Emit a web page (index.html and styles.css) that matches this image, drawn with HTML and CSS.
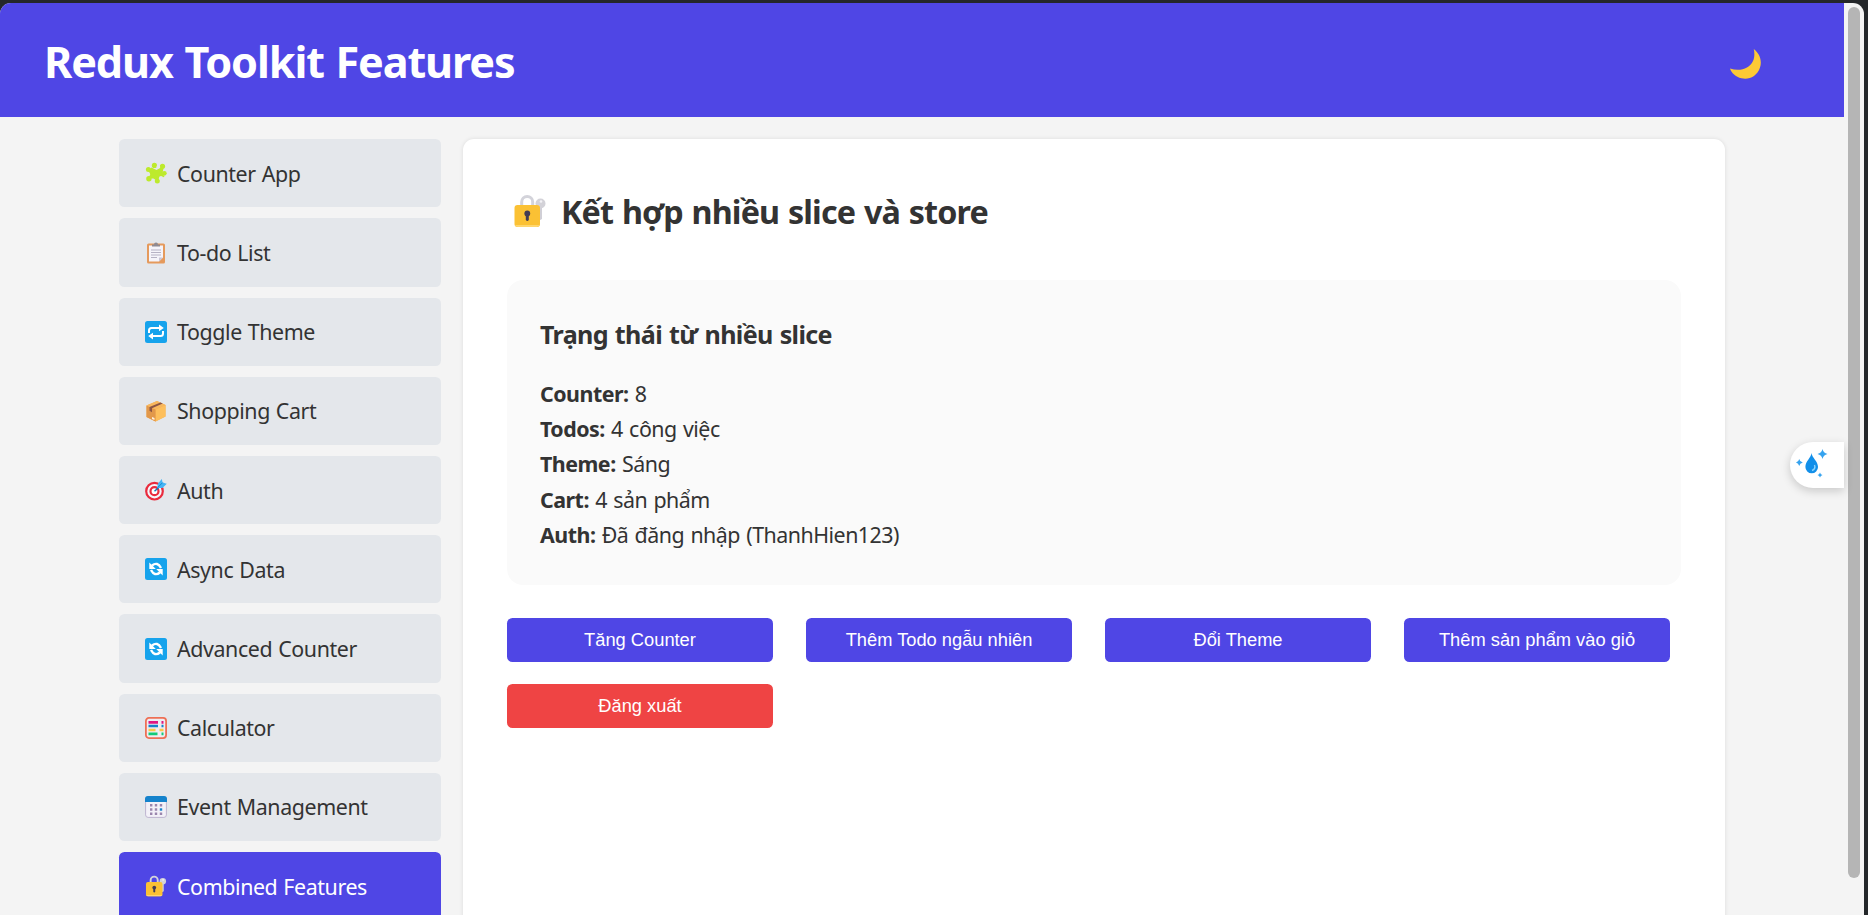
FILE: index.html
```html
<!DOCTYPE html>
<html lang="vi">
<head>
<meta charset="utf-8">
<title>Redux Toolkit Features</title>
<link rel="stylesheet" href="styles.css">
</head>
<body>
<svg class="sprite" aria-hidden="true">
  <symbol id="puzzle" viewBox="0 0 22 22">
    <g fill="#bdea2c"><path d="M6.500 5.500l5 2.500 4.500-2.500 2.500 1-1 4.500 2 4-5.100.5-2 3.500-4-2.500-4.900 0 1.500-4-1.500-4.500z"/>
    <circle cx="9.400" cy="3.400" r="2.600"/><circle cx="17.500" cy="4.300" r="2.600"/><circle cx="3.400" cy="7.600" r="2.500"/><circle cx="19.300" cy="11.300" r="2.400"/><circle cx="3.900" cy="16.800" r="2.700"/><circle cx="12.300" cy="18.900" r="2.500"/></g>
    <circle cx="13.300" cy="4.500" r="1.700" fill="#e4e7eb"/><circle cx="16" cy="16" r="2" fill="#e4e7eb"/><circle cx="3.300" cy="12.300" r="1.700" fill="#e4e7eb"/>
  </symbol>
  <symbol id="clipboard" viewBox="0 0 22 22">
    <rect x="2" y="1.500" width="18" height="20" rx="1.500" fill="#e59a5c"/><path d="M4 3.500h14v12l-4 4H4z" fill="#f5f4fa"/><path d="M14 19.500v-4h4z" fill="#c9c5d6"/><path d="M7 4V2.500h2a2 2 0 0 1 4 0h2V4.500H7z" fill="#8f8a91"/><path d="M6 8h10M6 10.500h10M6 13h10M6 15.500h6" stroke="#b6b2c4" stroke-width="1"/>
  </symbol>
  <symbol id="repeat" viewBox="0 0 22 22">
    <rect width="22" height="22" rx="2.500" fill="#16a3ec"/><path d="M4 12V9.500Q4 7 6.500 7H15M18 10v2.500Q18 15 15.500 15H7" fill="none" stroke="#fff" stroke-width="2"/><path d="M14 3.500L18.800 7 14 10.300zM8 11.700L3.200 15 8 18.500z" fill="#fff"/>
  </symbol>
  <symbol id="box" viewBox="0 0 22 22">
    <path d="M1.500 5.500L12 1l8.500 4v11.500L10.500 21.500l-9-4.500z" fill="#f2a94f"/><path d="M10.500 9.500v12l10-5V5z" fill="#fdbf5c"/><path d="M1.500 5.500v11.500l9 4.500v-12z" fill="#e2984a"/><path d="M1.500 5.500L12 1l8.500 4-10 4.500z" fill="#f8b75d"/><path d="M4.500 7l11-4.500 2.200 1.100L7 8.200v4l-2.500-1.400z" fill="#8c5543"/><path d="M7 17l2.500 1v2L7 19z" fill="#fff0dc"/>
  </symbol>
  <symbol id="target" viewBox="0 0 22 22">
    <circle cx="9.500" cy="12.200" r="8.300" fill="#f5f5fa" stroke="#e92b3d" stroke-width="2.200"/><circle cx="9.500" cy="12.200" r="4" fill="#fff" stroke="#e92b3d" stroke-width="2.200"/><path d="M9.500 12.200l5-4.500" stroke="#1477bb" stroke-width="1.500"/><path d="M12 9l1-4.500L16.800 0l.8 3.500 4.200 1.200L17.500 9z" fill="#45b5f5"/><path d="M12.500 8.700l5-5" stroke="#1689cf"/>
  </symbol>
  <symbol id="sync" viewBox="0 0 22 22">
    <rect width="22" height="22" rx="2.500" fill="#16a3ec"/><path d="M7 7.500Q12.500 3.300 16 10M15 14.500Q9.500 18.700 6 12" fill="none" stroke="#fff" stroke-width="2.400"/><path d="M4.300 4.500v6.500h6.500zM17.700 17.500V11h-6.500z" fill="#fff"/>
  </symbol>
  <symbol id="abacus" viewBox="0 0 22 22">
    <rect x=".9" y=".9" width="20.200" height="20.200" rx="3" fill="#efedf2" stroke="#ee7055" stroke-width="1.800"/><g stroke-width="2.700"><path d="M3.500 5.300h9.500M16.500 5.300h2" stroke="#df1683"/><path d="M3.500 9h9.500M16.500 9h2" stroke="#1682cb"/><path d="M3.500 13h7M14.500 13h4" stroke="#fbc947"/><path d="M3.500 16.900h9M16.500 16.900h2" stroke="#12cb78"/></g>
  </symbol>
  <symbol id="calendar" viewBox="0 0 22 22">
    <rect x=".6" y=".6" width="20.800" height="20.800" rx="2.500" fill="#f3f1f8" stroke="#bdb4cf" stroke-width="1"/><path d="M0 6V3Q0 0 3 0h16q3 0 3 3v3z" fill="#1583cc"/><g fill="#9a86ad"><path d="M5 8h2.400v2.400H5zM9.800 8h2.400v2.400H9.800zM14.800 8h2.400v2.400h-2.400zM5 12.300h2.400v2.400H5zM9.800 12.300h2.400v2.400H9.800zM5 16.600h2.400V19H5zM9.800 16.600h2.400V19H9.800zM14.800 16.600h2.400V19h-2.400z"/></g><path d="M14.800 12.300h2.400v2.400h-2.400z" fill="#1583cc"/>
  </symbol>
  <symbol id="lock" viewBox="0 0 32 34">
    <path d="M24.500 9h3.500v16l-3.500 2z" fill="#d0cfd6"/><circle cx="26.500" cy="9.500" r="5" fill="#d3d2d8"/><circle cx="27" cy="7.500" r="1.300" fill="#f3f2f5"/><path d="M7.700 13V8a5.500 5.500 0 0 1 11 0v5" fill="none" stroke="#d3d3da" stroke-width="3"/><rect x=".5" y="11" width="25.500" height="22" rx="3" fill="#fbc134"/><path d="M1 31h24.500q-.8 2-3 2H4q-2.500 0-3-2z" fill="#ffd66d"/><circle cx="13.300" cy="19.500" r="2.900" fill="#433b53"/><path d="M11.800 20h3v6q-1.500 2-3 0z" fill="#433b53"/>
  </symbol>
  <symbol id="moon" viewBox="0 0 31 30">
    <path d="M23.800 0C29 4 32.500 11 30 18.500 27 27.500 19 31 11.500 29.300 5.500 28 1.500 24 0 19.500c10 3.500 19.500 0 23-7.500 1.700-3.700 1.600-8 .8-12z" fill="#fdc935"/>
  </symbol>
  <symbol id="drop" viewBox="0 0 32 28">
    <path d="M15.500 0c.5 5 6.500 8 6.500 14a6.300 6.300 0 0 1-12.600 0C9.400 8 15 5 15.500 0z" fill="#128fe9"/><path d="M18.500 12q1.500 4-2.500 5.500" fill="none" stroke="#8bd5ff" stroke-width="1.400"/><g fill="#36a3ef"><path d="M26.500-4q.8 4 5 5-4.200 1-5 5-.8-4-5-5 4.200-1 5-5zM3.200 6q.6 3 3.600 3.500-3 .6-3.600 3.500Q2.600 10 0 9.500 2.600 9 3.200 6zM24 19.500q.5 2 2.500 2.500-2 .5-2.500 2.500-.5-2-2.500-2.500 2-.5 2.500-2.500z"/></g>
  </symbol>
</svg>

<div class="window">
  <div class="page">
    <header class="header">
      <h1 class="header-title">Redux Toolkit Features</h1>
      <svg class="moon"><use href="#moon"/></svg>
    </header>
    <div class="layout">
      <nav class="sidebar">
        <a class="item"><svg class="icon"><use href="#puzzle"/></svg><span>Counter App</span></a>
        <a class="item"><svg class="icon"><use href="#clipboard"/></svg><span>To-do List</span></a>
        <a class="item"><svg class="icon"><use href="#repeat"/></svg><span>Toggle Theme</span></a>
        <a class="item"><svg class="icon"><use href="#box"/></svg><span>Shopping Cart</span></a>
        <a class="item"><svg class="icon"><use href="#target"/></svg><span>Auth</span></a>
        <a class="item"><svg class="icon"><use href="#sync"/></svg><span>Async Data</span></a>
        <a class="item"><svg class="icon"><use href="#sync"/></svg><span>Advanced Counter</span></a>
        <a class="item"><svg class="icon"><use href="#abacus"/></svg><span>Calculator</span></a>
        <a class="item"><svg class="icon"><use href="#calendar"/></svg><span>Event Management</span></a>
        <a class="item active"><svg class="icon"><use href="#lock"/></svg><span>Combined Features</span></a>
      </nav>
      <main class="content">
        <h2 class="title"><svg class="title-icon"><use href="#lock"/></svg><span>Kết hợp nhiều slice và store</span></h2>
        <section class="status">
          <h3 class="status-title">Trạng thái từ nhiều slice</h3>
          <p class="row"><b>Counter:</b> 8</p>
          <p class="row"><b>Todos:</b> 4 công việc</p>
          <p class="row"><b>Theme:</b> Sáng</p>
          <p class="row"><b>Cart:</b> 4 sản phẩm</p>
          <p class="row"><b>Auth:</b> Đã đăng nhập (ThanhHien123)</p>
        </section>
        <div class="actions">
          <button class="btn">Tăng Counter</button>
          <button class="btn">Thêm Todo ngẫu nhiên</button>
          <button class="btn">Đổi Theme</button>
          <button class="btn">Thêm sản phẩm vào giỏ</button>
          <button class="btn danger">Đăng xuất</button>
        </div>
      </main>
    </div>
    <div class="assistant"><svg class="drop"><use href="#drop"/></svg></div>
  </div>
  <div class="scrollbar"><div class="thumb"></div></div>
</div>
</body>
</html>
```
FILE: styles.css
```css
* { box-sizing: border-box; }

body {
  margin: 0;
  height: 915px;
  overflow: hidden;
  padding: 3px 4px 0 0;
  background: #24272a;
  color: #333;
  font-family: "Noto Sans", sans-serif;
  font-size: 21.400px;
}

.sprite { position: absolute; width: 0; height: 0; }

.window {
  display: flex;
  height: 912px;
  overflow: hidden;
  border-radius: 11px 11px 0 0;
  background: #f4f4f4;
}

.page { position: relative; flex: 1; }

.header {
  display: flex;
  align-items: center;
  justify-content: space-between;
  height: 114px;
  padding: 0 83px 0 44px;
  background: #4f46e5;
  color: #fff;
}

.header-title { margin: 4px 0 0; font-size: 43.200px; line-height: 60px; letter-spacing: -1.120px; word-spacing: 1.500px; }

.moon { width: 31px; height: 30px; margin-top: 8px; }

.layout {
  display: flex;
  gap: 22px;
  padding: 22px 119px 0;
}

.sidebar { display: flex; flex-direction: column; gap: 11px; width: 322px; padding-top: 0.300px; }

.item {
  display: flex;
  align-items: center;
  gap: 10px;
  height: 68.200px;
  padding: 0 26px;
  border-radius: 5.500px;
  background: #e4e7eb;
  white-space: nowrap;
  letter-spacing: -0.400px;
  word-spacing: 0.800px;
}

.item.active { background: #4f46e5; color: #fff; }

.icon { width: 22px; height: 22px; }

.content {
  flex: 1;
  height: 850px;
  padding: 44px;
  border-radius: 11px;
  background: #fff;
  box-shadow: 0 0 4px rgba(0, 0, 0, 0.1);
}

.title {
  display: flex;
  align-items: center;
  gap: 15px;
  height: 53px;
  margin: 1px 0 43px;
  padding-left: 7px;
  font-size: 32.300px;
  letter-spacing: -0.850px;
  word-spacing: 1.200px;
}

.title-icon { width: 32px; height: 34px; }

.status {
  height: 305px;
  padding: 34px 33px 32px;
  border-radius: 16px;
  background: #fafafa;
}

.status-title { margin: 0 0 21px; font-size: 25.100px; line-height: 41px; letter-spacing: -0.650px; word-spacing: 1.100px; }

.row { margin: 0; line-height: 35.200px; letter-spacing: -0.500px; word-spacing: 1.200px; }

.actions { display: flex; flex-wrap: wrap; gap: 22px 33px; margin-top: 33px; }

.btn {
  width: 266px;
  height: 44px;
  padding: 0;
  border: 0;
  border-radius: 5.500px;
  background: #4f46e5;
  color: #fff;
  font-family: "Liberation Sans", Arial, sans-serif;
  font-size: 18.300px;
}

.btn.danger { background: #ef4444; }

.assistant {
  position: absolute;
  right: 0;
  top: 439px;
  display: flex;
  align-items: center;
  width: 54px;
  height: 46px;
  padding: 3px 0 0 6px;
  border-radius: 23px 0 0 23px;
  background: #fff;
  box-shadow: 0 3px 10px rgba(0, 0, 0, 0.18);
}

.drop { width: 32px; height: 28px; overflow: visible; }

#drop { overflow: visible; }

.scrollbar { width: 20px; padding: 4px 4px 0; }

.thumb { height: 871px; border-radius: 6px; background: #b5b5b5; }
```
